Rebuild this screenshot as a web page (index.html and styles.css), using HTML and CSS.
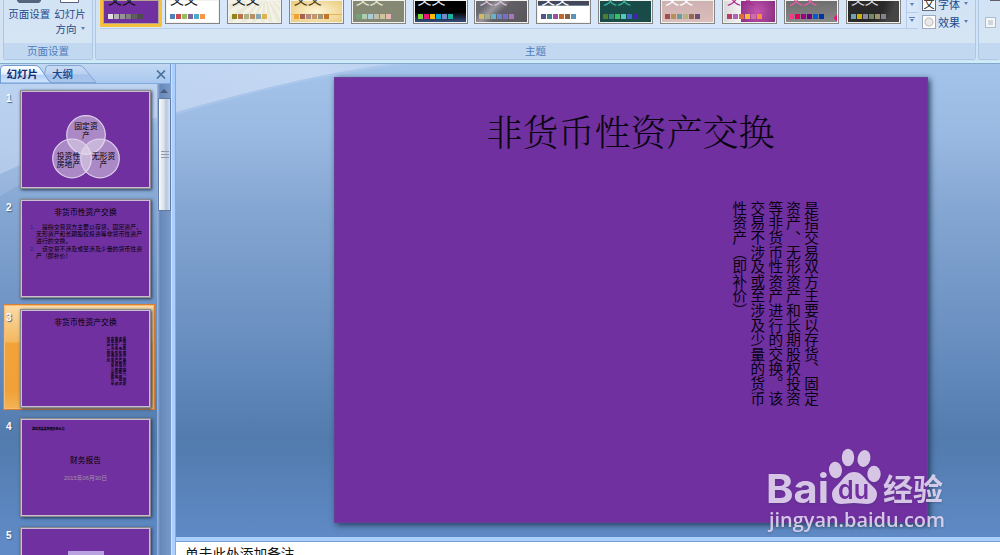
FILE: index.html
```html
<!DOCTYPE html>
<html lang="zh-CN">
<head>
<meta charset="utf-8">
<title>非货币性资产交换</title>
<link rel="stylesheet" href="styles.css">
</head>
<body>
<div class="app">
  <header class="ribbon">
    <section class="group group-page">
      <div class="group-body page-tools">
        <div class="tool"><svg width="24" height="4"><path d="M0 0h24v1l-2 2H2L0 1z" fill="#56657d"/></svg><span>页面设置</span></div>
        <div class="tool"><svg width="20" height="4"><path d="M.5 0v2.500h18V0" fill="#fff" stroke="#56657d"/></svg><span>幻灯片</span><span>方向<b class="caret"></b></span></div>
      </div>
      <div class="group-label">页面设置</div>
    </section>
    <section class="group group-theme">
      <div class="group-body theme-body">
        <div class="gallery">
          <div class="theme t1 selected"><span>文文</span><i class="swatches"></i></div>
          <div class="theme t2"><span>文文</span><i class="swatches"></i></div>
          <div class="theme t3"><span>文文</span><i class="swatches"></i></div>
          <div class="theme t4"><span>文文</span><i class="swatches"></i></div>
          <div class="theme t5"><span>文文</span><i class="swatches"></i></div>
          <div class="theme t6"><span>文文</span><i class="swatches"></i></div>
          <div class="theme t7"><span>文文</span><i class="swatches"></i></div>
          <div class="theme t8"><span>文文</span><i class="swatches"></i></div>
          <div class="theme t9"><span>文文</span><i class="swatches"></i></div>
          <div class="theme t10"><span>文文</span><i class="swatches"></i></div>
          <div class="theme t11"><span>文文</span><i class="swatches"></i></div>
          <div class="theme t12"><span>文文</span><i class="swatches"></i></div>
          <div class="theme t13"><span>文文</span><i class="swatches"></i></div>
          <div class="gallery-nav"><div><b class="caret"></b></div><div class="more"><b class="caret"></b></div></div>
        </div>
        <div class="theme-options">
          <div class="option"><i class="font-icon">文</i>字体<b class="caret"></b></div>
          <div class="option"><i class="effect-icon"></i>效果<b class="caret"></b></div>
        </div>
      </div>
      <div class="group-label">主题</div>
    </section>
    <section class="group group-background">
      <div class="group-body bg-body"><i class="dark-bit"></i><i class="checkbox"></i></div>
      <div class="group-label"></div>
    </section>
  </header>

  <main class="workspace">
    <svg class="swoosh" width="420" height="132" viewBox="0 64 420 132">
      <defs><linearGradient id="sw" x2="1"><stop offset="0" stop-color="#cfe0f5" stop-opacity=".45"/><stop offset=".8" stop-color="#d5e3f7" stop-opacity=".6"/><stop offset="1" stop-color="#d5e3f7" stop-opacity=".35"/></linearGradient></defs>
      <path d="M0 64V174Q80 137 176 112Q300 76 390 64z" fill="url(#sw)"/>
      <path d="M0 64V196Q80 148 176 115Q300 77 410 64z" fill="#d5e3f7" opacity=".17"/>
    </svg>
    <aside class="outline">
      <div class="tabs">
        <svg width="100" height="18" viewBox="0 0 100 18">
          <defs>
            <linearGradient id="ta" y2="1" x2="0"><stop stop-color="#fff"/><stop offset=".5" stop-color="#e0edff"/><stop offset=".55" stop-color="#b6d2f8"/><stop offset="1" stop-color="#cfe5ff"/></linearGradient>
            <linearGradient id="tb" y2="1" x2="0"><stop stop-color="#c9dcf5"/><stop offset=".5" stop-color="#bbd1f0"/><stop offset=".55" stop-color="#a3c1e9"/><stop offset="1" stop-color="#a9c7ee"/></linearGradient>
          </defs>
          <path d="M43 17.500L46 2Q47 .5 50 .5H79Q82 .5 84 3L96 17.500z" fill="url(#tb)" stroke="#82a6d4"/>
          <path d="M.5 18V4Q.5 .5 4 .5H35Q38 .5 40 3L49 16L52 18z" fill="url(#ta)" stroke="#709bd0"/>
          <text x="6.500" y="12.500" class="tab-text active">幻灯片</text>
          <text x="52" y="12.500" class="tab-text">大纲</text>
        </svg>
        <svg class="close" width="10" height="9" viewBox="0 0 10 9"><path d="M1 .5L9 8.500M9 .5L1 8.500" stroke="#47739f" stroke-width="1.700"/></svg>
      </div>
      <div class="outline-body">
        <div class="slides">
          <div class="item"><b>1</b><div class="mini">
            <svg width="129" height="97" viewBox="21 91 129 97">
              <g fill="#e5dfec" fill-opacity=".5" stroke="#ded0ea" stroke-width="1.200"><circle cx="86" cy="135" r="19.300"/><circle cx="72" cy="158.500" r="19.300"/><circle cx="100" cy="158.500" r="19.300"/></g>
              <g class="venn"><text x="86" y="129">固定资</text><text x="86" y="137.500">产</text><text x="68.500" y="158.500">投资性</text><text x="68.500" y="167">房地产</text><text x="103.500" y="158.500">无形资</text><text x="103.500" y="167">产</text></g>
            </svg></div></div>
          <div class="item"><b>2</b><div class="mini mini-text">
            <h3>非货币性资产交换</h3>
            <div class="point"><em>1.</em><p>　是指交易双方主要以存货、固定资产、<br>无形资产和长期股权投资等非货币性资产<br>进行的交换。</p></div>
            <div class="point"><em>2.</em><p>　该交易不涉及或至涉及少量的货币性资<br>产（即补价）</p></div></div></div>
          <div class="item current"><b>3</b><div class="mini mini-text">
            <h3>非货币性资产交换</h3>
            <div class="mini-vertical">是指交易双方主要以存货、固定<br>资产、无形资产和长期股权投资<br>等非货币性资产进行的交换。该<br>交易不涉及或至涉及少量的货币<br>性资产（即补价）</div></div></div>
          <div class="item"><b>4</b><div class="mini mini-cover"><small>湖北省某某有限责任公司</small><strong>财务报告</strong><span>2015年06月30日</span></div></div>
          <div class="item"><b>5</b><div class="mini mini-five"><i></i></div></div>
        </div>
        <div class="scroll"><i class="up"></i><div class="thumb"><svg width="8" height="7"><path d="M0 .5h8M0 3.500h8M0 6.500h8" stroke="#8f99a8"/></svg></div></div>
      </div>
    </aside>
    <div class="splitter"></div>
    <div class="editor">
      <div class="canvas">
        <article class="slide">
          <h1>非货币性资产交换</h1>
          <div class="vertical">是指交易双方主要以存货、固定<br>资产、无形资产和长期股权投资<br>等非货币性资产进行的交换。该<br>交易不涉及或至涉及少量的货币<br>性资产（即补价）</div>
        </article>
      </div>
      <div class="notes">单击此处添加备注</div>
    </div>
  </main>
  <svg class="watermark" width="190" height="95" viewBox="760 440 190 95">
    <g class="mark">
      <text x="766" y="503" class="bai" textLength="63" lengthAdjust="spacingAndGlyphs">Bai</text>
      <ellipse cx="835.500" cy="470" rx="6.500" ry="8.300" transform="rotate(-8 835.500 470)"/>
      <ellipse cx="848" cy="457.500" rx="6.200" ry="8.800"/>
      <ellipse cx="864" cy="458.500" rx="6.400" ry="8.500" transform="rotate(12 864 458.500)"/>
      <ellipse cx="874" cy="474" rx="6.700" ry="8.300"/>
      <path d="M854 472C861 472 864 477 868 482C873 487 877 489 877 494C877 500 873 504 867 504C862 504 859 503 854 503C849 503 846 504 841 504C835 504 832 500 832 494C832 489 837 486 841 481C845 476 848 472 854 472Z"/>
      <text x="883" y="500" class="jingyan" textLength="60" lengthAdjust="spacingAndGlyphs">经验</text>
      <text x="769" y="527" class="url" textLength="176" lengthAdjust="spacingAndGlyphs">jingyan.baidu.com</text>
    </g>
    <text x="838" y="499" class="du" textLength="31" lengthAdjust="spacingAndGlyphs">du</text>
  </svg>
</div>
</body>
</html>
```
FILE: styles.css
```css
* { box-sizing: border-box; }
body { margin: 0; font-family: "Liberation Sans", "Noto Sans CJK SC", sans-serif; }
h1, h3, p { margin: 0; font-weight: 400; }
i, em { font-style: normal; }
.app { position: relative; width: 1000px; height: 555px; overflow: hidden; display: flex; flex-direction: column; }

/* Ribbon */
.ribbon { height: 64px; flex: none; display: flex; gap: 2px; padding: 0 0 3px 3px; background: #d3e3f4; border-bottom: 1px solid #86a8cc; box-shadow: inset 0 -2px #cdeef7; }
.group { display: flex; flex-direction: column; height: 60px; border: 1px solid #a9c7e6; border-top: 0; border-radius: 0 0 3px 3px; background: linear-gradient(#d2e3f5, #d6e5f3 43px); }
.group-page { width: 90px; }
.group-theme { width: 881px; }
.group-background { flex: 1; border-right: 0; overflow: hidden; }
.group-body { height: 43px; flex: none; }
.group-label { flex: 1; background: #c1d8f0; color: #4e7cba; font-size: 10.500px; line-height: 16px; text-align: center; }
.page-tools { display: flex; justify-content: center; gap: 4px; padding-right: 2px; }
.tool { display: flex; flex-direction: column; align-items: center; color: #234a8c; font-size: 10.500px; line-height: 15px; white-space: nowrap; }
.tool svg { margin-bottom: 4px; height: 3px; flex: none; }
.caret { display: inline-block; border: 2.500px solid transparent; border-top: 3px solid #5c7fb5; border-bottom: 0; margin-left: 4px; vertical-align: 3px; }
.theme-body { display: flex; padding-left: 4px; }
.gallery { height: 29px; width: 818px; display: flex; gap: 6.920px; border-bottom: 1px solid #b9d0ec; background: #d7e6f9; }
.theme { position: relative; flex: none; width: 55px; height: 24px; border: 1px solid #858585; border-top: 0; box-shadow: inset 0 0 0 1px #f2f2ee; overflow: hidden; display: flex; flex-direction: column; padding: 0 0 4px 4px; justify-content: flex-end; background: var(--bg); color: var(--fg); }
.theme span { font-size: 14px; line-height: 14px; margin-bottom: 8px; white-space: nowrap; font-weight: 400; }
.swatches { width: 35px; height: 5px; flex: none; background: linear-gradient(90deg, var(--a) 0 5px, transparent 5px 6px, var(--b) 6px 11px, transparent 11px 12px, var(--c) 12px 17px, transparent 17px 18px, var(--d) 18px 23px, transparent 23px 24px, var(--e) 24px 29px, transparent 29px 30px, var(--f) 30px 35px); }
.theme.selected { width: 62px; height: 27px; margin-right: -4px; border: solid #f5c13c; border-width: 0 3px 3px; border-radius: 0 0 2px 2px; box-shadow: inset 0 0 0 1px #b5a58e; padding: 0 0 5px 5px; }
.t1 { --bg:#7030a0; --fg:#111; --a:#e0e0e0; --b:#b5b3b5; --c:#969696; --d:#808080; --e:#5f5f5f; --f:#4d4d4d; }
.t2 { --bg:#fff; --fg:#222; --a:#4f81bd; --b:#c94d50; --c:#9bbb59; --d:#8064a2; --e:#4bacc6; --f:#f79646; }
.t3 { --bg:repeating-conic-gradient(from 5deg at 70% -30%, #e9e8d9 0 8deg, #f3f2e5 8deg 16deg); --fg:#222; --a:#8f851b; --b:#b87349; --c:#aeb185; --d:#b69162; --e:#86a9b5; --f:#ddb34b; }
.t4 { --bg:linear-gradient(transparent 14px,#e8b451 14px 15px,transparent 15px),radial-gradient(#fdf6d8,#e9c877); --fg:#543d13; --a:#f0a22e; --b:#a5644e; --c:#b58b80; --d:#c3986d; --e:#a19574; --f:#c17529; }
.t5 { --bg:#858973; --fg:#e5ead5; --a:#72a376; --b:#b0ccb0; --c:#a8cdd7; --d:#c0beaf; --e:#cec597; --f:#e8b7b7; }
.t6 { --bg:linear-gradient(#000 12px,#3b568c); --fg:#e3e9ef; --a:#7fd13b; --b:#ea157a; --c:#feb80a; --d:#00addc; --e:#738ac8; --f:#1ab39f; }
.t7 { --bg:linear-gradient(135deg,#6a6970 20%,#98969b 35%,#626066 50%,#58545b); --fg:#d9c4da; --a:#ceb966; --b:#9cb084; --c:#6bb1c9; --d:#6585cf; --e:#7e6bc9; --f:#a379bb; }
.t8 { --bg:linear-gradient(#44465c 5px,#728a93 5px 6px,#fff 6px); --fg:#fff; --a:#53548a; --b:#438086; --c:#a04da3; --d:#c4652d; --e:#8b5d3d; --f:#5c92b5; }
.t9 { --bg:#194c48; --fg:#42b4a0; --a:#4e7c31; --b:#338f7c; --c:#37c25f; --d:#55c7c0; --e:#3c67ce; --f:#4522b0; }
.t10 { --bg:linear-gradient(#cdb1b1,#dcbebb); --fg:#fff; --a:#a24d50; --b:#b69058; --c:#6c9c9b; --d:#b4b385; --e:#936750; --f:#685078; }
.t11 { --bg:linear-gradient(90deg,#d8d8d8,#f5f5f5 18px,transparent 18px),radial-gradient(circle at 65% 50%,#c455ae,#7c277a 65%); --fg:#a82b94; --a:#b83d68; --b:#ac66bb; --c:#de6c36; --d:#f9b639; --e:#cf6da4; --f:#fa8d3d; }
.t12 { --bg:conic-gradient(from 48deg at 48px 18px,#ed0e78 0 84deg,transparent 84deg),linear-gradient(#6d6d6d,#898989); --fg:#e35da8; --a:#ff388c; --b:#e40059; --c:#9c007f; --d:#68007f; --e:#005bd3; --f:#00349e; }
.t13 { --bg:radial-gradient(circle at 30% 0,#292929 50%,#454545 75%); --fg:#d5d5d5; --a:#6ea0b0; --b:#ccaf0a; --c:#8d89a4; --d:#748560; --e:#9e9273; --f:#7e848d; }
.gallery-nav { width: 12px; height: 29px; display: flex; flex-direction: column; border-left: 1px solid #b6cdea; margin-left: -2px; }
.gallery-nav div { flex: 1; display: flex; flex-direction: column; align-items: center; padding-top: 3px; border-bottom: 1px solid #b6cdea; }
.gallery-nav .caret { margin: 0; flex: none; }
.gallery-nav .more { padding-top: 4px; flex: 1.200; }
.gallery-nav .more::before { content: ""; width: 6px; height: 1px; background: #5c7fb5; margin-bottom: 1px; }
.theme-options { padding-left: 4px; display: flex; flex-direction: column; margin-top: -5px; gap: 1px; color: #234a8c; font-size: 11px; }
.option { display: flex; align-items: center; height: 17px; gap: 2px; white-space: nowrap; }
.font-icon, .effect-icon { width: 14px; height: 14px; border: 1px solid #5d6c87; background: #fff; color: #111; line-height: 12px; text-align: center; }
.effect-icon { border-color: #98a9c0; background: radial-gradient(circle, #e9e9e9 0 3px, #bbb 4px, #fff 5px); }
.option .caret { margin-left: 2px; }
.bg-body { display: flex; flex-direction: column; padding-left: 6px; gap: 16px; }
.dark-bit { width: 10px; height: 1px; background: #61606a; margin-left: 5px; }
.checkbox { width: 11px; height: 11px; border: 1px solid #abbbd0; background: #cfd6de; box-shadow: inset 0 0 0 2px #f4f6f7; }

/* Workspace */
.workspace { position: relative; flex: 1; min-height: 0; display: flex; background: linear-gradient(#a4c4eb, #9bbae3 66px, #84a6d2 146px, #668cbe 290px, #527bae 375px, #5f8ac5 475px); }
.swoosh { position: absolute; left: 0; top: 0; }
.outline { position: relative; width: 171px; display: flex; flex-direction: column; }
.tabs { height: 20px; flex: none; display: flex; justify-content: space-between; align-items: center; padding: 1px 4px 0 0; background: linear-gradient(#c2d8f3, #a9c8ef); border-bottom: 1px solid #83aadb; border-right: 1px solid #6f97c9; }
.tab-text { font-size: 10.500px; fill: #15428b; font-weight: 500; }
.tab-text.active { font-weight: 700; fill: #102b70; }
.outline-body { flex: 1; min-height: 0; display: flex; justify-content: space-between; }
.slides { padding: 1px 0 0 3px; display: flex; flex-direction: column; width: 156px; gap: 3.300px; overflow: hidden; }
.item { width: 152px; height: 106px; flex: none; display: flex; padding: 4px 0 0 2px; border: 1px solid transparent; }
.item > b { width: 14px; color: #fff; font-size: 10px; line-height: 17px; text-shadow: 1px 1px 1px #46638c; }
.item.current { border: 1px solid #dc7e31; background: linear-gradient(#fbdcaa, #f3b85e 37px, #f2a33a 38px, #f0a038 85px, #f4b455); box-shadow: inset 0 0 0 1px #f8bd73; }
.mini { width: 131px; height: 99px; outline: 1px solid #8c8a8a; outline-offset: -1px; border: 2px solid #c9bfd3; background: #7030a0; box-shadow: 1px 1px 3px #23395b; overflow: hidden; flex: none; }
.mini svg { display: block; margin: -1px; }
.venn text { font-size: 7.800px; text-anchor: middle; font-weight: 400; }
.mini-text h3 { text-align: center; font-size: 7.800px; line-height: 10px; margin-top: 7px; font-weight: 400; }
.point { display: flex; font-size: 5.900px; line-height: 6.900px; padding-left: 8px; font-weight: 400; white-space: nowrap; }
h3 + .point { margin-top: 6px; }
.point + .point { margin-top: 1px; }
.point em { width: 6px; color: #35266a; }
.mini-vertical { writing-mode: vertical-rl; font-size: 3.430px; line-height: 4px; margin: 9px 23px 0 auto; width: 20px; height: 49px; white-space: nowrap; font-weight: 700; }
.mini-cover { display: flex; flex-direction: column; align-items: center; white-space: nowrap; }
.mini-cover small { align-self: flex-start; margin: 7px 0 0 10px; font-size: 2.950px; line-height: 5px; font-weight: 900; }
.mini-cover strong { margin-top: 23px; font-size: 7.700px; line-height: 11px; font-weight: 400; }
.mini-cover span { margin-top: 8px; font-size: 5.800px; line-height: 8px; color: #a394a8; }
.mini-five i { display: block; width: 36px; height: 10px; margin: 22px auto; background: #b8a3e0; }
.scroll { width: 14px; background: linear-gradient(90deg, #9db9de, #6688b8 3px, #7a9ac8); opacity: .98; }
.up { display: block; width: 0; margin: 5px auto 5px; border: 4px solid transparent; border-top: 0; border-bottom: 4px solid #4a5878; }
.thumb { margin-left: 1px; width: 13px; height: 113px; border: 1px solid #6279a5; border-radius: 1px; background: linear-gradient(90deg, #fff, #e6eaf0 3px, #dde4ec 5px, #b6c7de 7px, #d8e3ef); display: grid; place-items: center; }
.splitter { position: relative; width: 5px; border-left: 1px solid #cbe2ff; border-right: 1px solid #82aade; background: #abd0ff; }
.editor { position: relative; flex: 1; display: flex; flex-direction: column; }
.canvas { height: 473px; flex: none; padding: 13px 72px 13px 158px; }
.slide { height: 446px; background: #7030a0; border: 1px solid #6a3d98; box-shadow: 2px 2px 6px #263d5e; overflow: hidden; }
.slide h1 { margin: 30px 1px 0 0; text-align: center; font: 300 36px/46px "Noto Serif CJK SC", "Noto Sans CJK SC", serif; color: #0a0410; }
.vertical { writing-mode: vertical-rl; margin: 47px 109px 0 auto; font-size: 14.600px; line-height: 17.900px; height: 210px; white-space: nowrap; font-weight: 400; color: #080210; }
.notes { flex: 1; border: solid #abd0ff; border-width: 4px 0 0; box-shadow: inset 0 1px #739fd5; background: #fff; padding: 5px 9px; font-size: 13.700px; line-height: 18px; white-space: nowrap; color: #111; }

/* Brand overlay */
.watermark { position: absolute; left: 760px; top: 440px; filter: drop-shadow(0 1px 1px #27375155); }
.mark { fill: #e3d6f0; fill-opacity: .9; }
.bai { font: 700 40px Inter, sans-serif; }
.du { font: 600 26px Inter, sans-serif; fill: #7030a0; }
.jingyan { font: 700 30px "Noto Sans CJK SC", sans-serif; }
.url { font: 600 20px "Open Sans", "Noto Sans", sans-serif; }
```
